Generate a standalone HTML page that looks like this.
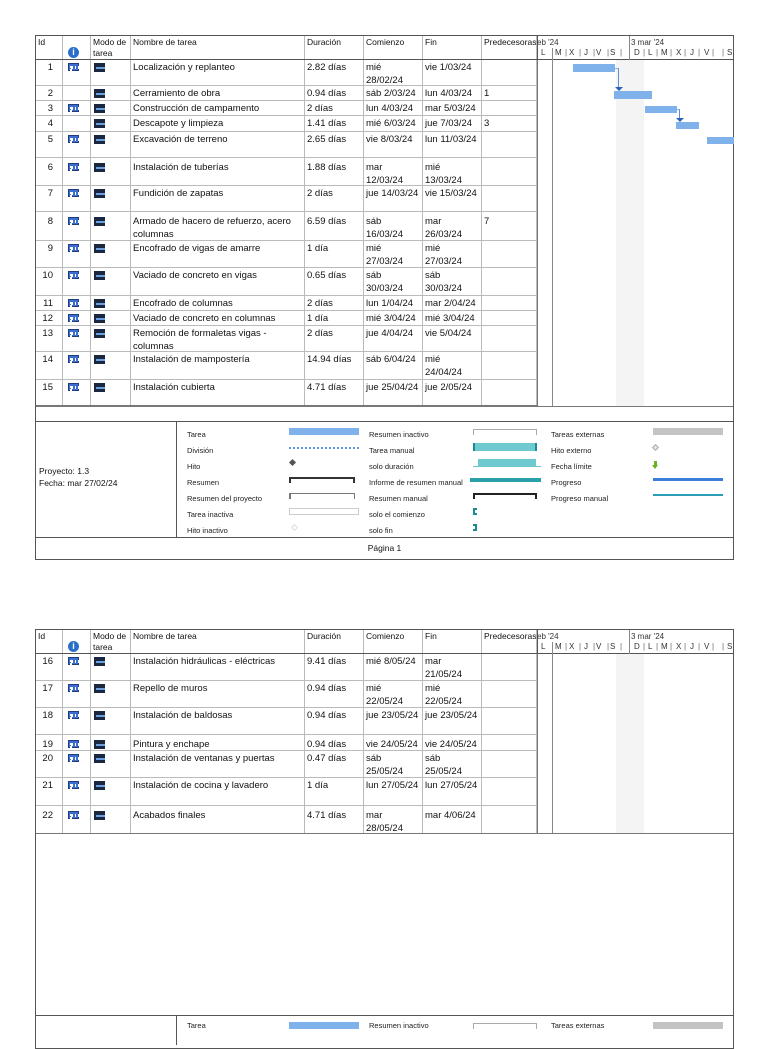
<!DOCTYPE html>
<html><head><meta charset="utf-8"><style>
*{margin:0;padding:0;box-sizing:border-box}
body{width:768px;height:1024px;background:#fff;position:relative;overflow:hidden;font-family:"Liberation Sans",sans-serif;font-size:9.5px;color:#111}
.pg{position:absolute;left:35px;width:699px;border:1px solid #555;background:#fff}
.r{position:absolute;left:0;width:501px;border-bottom:1px solid #bbb}
.c{position:absolute;top:0;bottom:0;border-right:1px solid #bbb;padding:1px 2px 0 2px;line-height:13px;overflow:hidden;white-space:nowrap}
.id{left:0;width:27px;text-align:right;padding-right:9px}
.ind{left:27px;width:28px}
.mo{left:55px;width:40px}
.nm{left:95px;width:174px}
.du{left:269px;width:59px}
.co{left:328px;width:59px;white-space:normal}
.fi{left:387px;width:59px;white-space:normal}
.pr{left:446px;width:55px}
.hd{font-size:8.5px;line-height:11px;padding-top:1px}
.cal{position:absolute;left:5px;top:3px;width:11px;height:8px;background:#3a6fd0;border:1px solid #233c80}
.cal:after{content:"";position:absolute;left:1px;top:2px;width:7px;height:3px;border-left:2px dotted #fff;border-right:2px dotted #fff;background:repeating-linear-gradient(90deg,#fff 0 1px,transparent 1px 3px)}
.md{position:absolute;left:3px;top:3px;width:11px;height:9px;background:#1a2740}
.md:after{content:"";position:absolute;left:2px;top:4px;width:9px;height:2px;background:#6aa0e0}
.bar{position:absolute;background:#7fb2ea}
.g{position:absolute;font-size:8px;color:#333;line-height:10px;white-space:nowrap}
.lg{position:absolute;font-size:7.5px;color:#222}
</style></head><body>

<!-- PAGE 1 -->
<div class="pg" style="top:35px;height:525px">
 <div class="r" style="top:0;height:24px;border-bottom:1px solid #555">
  <div class="c id hd" style="text-align:left">Id</div>
  <div class="c ind hd"><span style="position:absolute;left:5px;top:11px;width:11px;height:11px;border-radius:50%;background:#2a6fc9;color:#fff;font-weight:bold;font-size:9px;text-align:center;line-height:11px">i</span></div>
  <div class="c mo hd" style="white-space:normal">Modo de tarea</div>
  <div class="c nm hd">Nombre de tarea</div>
  <div class="c du hd">Duración</div>
  <div class="c co hd">Comienzo</div>
  <div class="c fi hd">Fin</div>
  <div class="c pr hd">Predecesoras</div>
 </div>
 <div style="position:absolute;left:501px;top:0;width:197px;height:24px;border-bottom:1px solid #555;border-left:1px solid #555"></div>
 <div style="position:absolute;left:501px;top:24px;width:1px;height:346px;background:#777"></div>
 <div style="position:absolute;left:516px;top:12px;width:1px;height:358px;background:#888"></div>
 <div style="position:absolute;left:580px;top:24px;width:28px;height:346px;background:#f4f4f4"></div>
 <div class="g" style="left:501px;top:2px">eb '24</div>
 <div class="g" style="left:595px;top:2px">3 mar '24</div>
 <div style="position:absolute;left:593px;top:0;width:1px;height:24px;background:#888"></div>
 <div class="g" style="left:505px;top:12px">L</div><div class="g" style="left:519px;top:12px">M</div><div class="g" style="left:533px;top:12px">X</div><div class="g" style="left:548px;top:12px">J</div><div class="g" style="left:560px;top:12px">V</div><div class="g" style="left:574px;top:12px">S</div><div class="g" style="left:598px;top:12px">D</div><div class="g" style="left:612px;top:12px">L</div><div class="g" style="left:625px;top:12px">M</div><div class="g" style="left:640px;top:12px">X</div><div class="g" style="left:654px;top:12px">J</div><div class="g" style="left:668px;top:12px">V</div><div class="g" style="left:691px;top:12px">S</div>
 <div class="g" style="left:529px;top:12px;color:#666">|</div><div class="g" style="left:543px;top:12px;color:#666">|</div><div class="g" style="left:557px;top:12px;color:#666">|</div><div class="g" style="left:571px;top:12px;color:#666">|</div><div class="g" style="left:584px;top:12px;color:#666">|</div><div class="g" style="left:607px;top:12px;color:#666">|</div><div class="g" style="left:620px;top:12px;color:#666">|</div><div class="g" style="left:634px;top:12px;color:#666">|</div><div class="g" style="left:648px;top:12px;color:#666">|</div><div class="g" style="left:662px;top:12px;color:#666">|</div><div class="g" style="left:676px;top:12px;color:#666">|</div><div class="g" style="left:686px;top:12px;color:#666">|</div>
 <div class="bar" style="left:537px;top:28px;width:42px;height:8px"></div>
 <div style="position:absolute;left:579px;top:32px;width:4px;height:20px;border-top:1px solid #7fb2ea;border-right:1px solid #5a90d8"></div>
 <div style="position:absolute;left:579px;top:51px;border-left:4px solid transparent;border-right:4px solid transparent;border-top:4px solid #2a60b8"></div>
 <div class="bar" style="left:578px;top:55px;width:38px;height:8px"></div>
 <div class="bar" style="left:609px;top:70px;width:32px;height:7px"></div>
 <div style="position:absolute;left:641px;top:73px;width:3px;height:10px;border-top:1px solid #7fb2ea;border-right:1px solid #5a90d8"></div>
 <div style="position:absolute;left:640px;top:82px;border-left:4px solid transparent;border-right:4px solid transparent;border-top:4px solid #2a60b8"></div>
 <div class="bar" style="left:640px;top:86px;width:23px;height:7px"></div>
 <div class="bar" style="left:671px;top:101px;width:27px;height:7px"></div>

 <div class="r" style="top:24px;height:26px"><div class="c id">1</div><div class="c ind"><i class="cal"></i></div><div class="c mo"><i class="md"></i></div><div class="c nm">Localización y replanteo</div><div class="c du">2.82 días</div><div class="c co">mié 28/02/24</div><div class="c fi">vie 1/03/24</div><div class="c pr"></div></div>
 <div class="r" style="top:50px;height:15px"><div class="c id">2</div><div class="c ind"></div><div class="c mo"><i class="md"></i></div><div class="c nm">Cerramiento de obra</div><div class="c du">0.94 días</div><div class="c co">sáb 2/03/24</div><div class="c fi">lun 4/03/24</div><div class="c pr">1</div></div>
 <div class="r" style="top:65px;height:15px"><div class="c id">3</div><div class="c ind"><i class="cal"></i></div><div class="c mo"><i class="md"></i></div><div class="c nm">Construcción de campamento</div><div class="c du">2 días</div><div class="c co">lun 4/03/24</div><div class="c fi">mar 5/03/24</div><div class="c pr"></div></div>
 <div class="r" style="top:80px;height:16px"><div class="c id">4</div><div class="c ind"></div><div class="c mo"><i class="md"></i></div><div class="c nm">Descapote y limpieza</div><div class="c du">1.41 días</div><div class="c co">mié 6/03/24</div><div class="c fi">jue 7/03/24</div><div class="c pr">3</div></div>
 <div class="r" style="top:96px;height:26px"><div class="c id">5</div><div class="c ind"><i class="cal"></i></div><div class="c mo"><i class="md"></i></div><div class="c nm">Excavación de terreno</div><div class="c du">2.65 días</div><div class="c co">vie 8/03/24</div><div class="c fi">lun 11/03/24</div><div class="c pr"></div></div>
 <div class="r" style="top:122px;height:28px"><div class="c id" style="padding-top:3px">6</div><div class="c ind"><i class="cal" style="top:5px"></i></div><div class="c mo"><i class="md" style="top:5px"></i></div><div class="c nm" style="padding-top:3px">Instalación de tuberías</div><div class="c du" style="padding-top:3px">1.88 días</div><div class="c co" style="padding-top:3px">mar 12/03/24</div><div class="c fi" style="padding-top:3px">mié 13/03/24</div><div class="c pr"></div></div>
 <div class="r" style="top:150px;height:26px"><div class="c id">7</div><div class="c ind"><i class="cal"></i></div><div class="c mo"><i class="md"></i></div><div class="c nm">Fundición de zapatas</div><div class="c du">2 días</div><div class="c co">jue 14/03/24</div><div class="c fi">vie 15/03/24</div><div class="c pr"></div></div>
 <div class="r" style="top:176px;height:29px"><div class="c id" style="padding-top:3px">8</div><div class="c ind"><i class="cal" style="top:5px"></i></div><div class="c mo"><i class="md" style="top:5px"></i></div><div class="c nm" style="padding-top:3px;white-space:normal">Armado de hacero de refuerzo, acero columnas</div><div class="c du" style="padding-top:3px">6.59 días</div><div class="c co" style="padding-top:3px">sáb 16/03/24</div><div class="c fi" style="padding-top:3px">mar 26/03/24</div><div class="c pr" style="padding-top:3px">7</div></div>
 <div class="r" style="top:205px;height:27px"><div class="c id">9</div><div class="c ind"><i class="cal"></i></div><div class="c mo"><i class="md"></i></div><div class="c nm">Encofrado de vigas de amarre</div><div class="c du">1 día</div><div class="c co">mié 27/03/24</div><div class="c fi">mié 27/03/24</div><div class="c pr"></div></div>
 <div class="r" style="top:232px;height:28px"><div class="c id">10</div><div class="c ind"><i class="cal"></i></div><div class="c mo"><i class="md"></i></div><div class="c nm">Vaciado de concreto en vigas</div><div class="c du">0.65 días</div><div class="c co">sáb 30/03/24</div><div class="c fi">sáb 30/03/24</div><div class="c pr"></div></div>
 <div class="r" style="top:260px;height:15px"><div class="c id">11</div><div class="c ind"><i class="cal"></i></div><div class="c mo"><i class="md"></i></div><div class="c nm">Encofrado de columnas</div><div class="c du">2 días</div><div class="c co">lun 1/04/24</div><div class="c fi">mar 2/04/24</div><div class="c pr"></div></div>
 <div class="r" style="top:275px;height:15px"><div class="c id">12</div><div class="c ind"><i class="cal"></i></div><div class="c mo"><i class="md"></i></div><div class="c nm">Vaciado de concreto en columnas</div><div class="c du">1 día</div><div class="c co">mié 3/04/24</div><div class="c fi">mié 3/04/24</div><div class="c pr"></div></div>
 <div class="r" style="top:290px;height:26px"><div class="c id">13</div><div class="c ind"><i class="cal"></i></div><div class="c mo"><i class="md"></i></div><div class="c nm" style="white-space:normal">Remoción de formaletas vigas - columnas</div><div class="c du">2 días</div><div class="c co">jue 4/04/24</div><div class="c fi">vie 5/04/24</div><div class="c pr"></div></div>
 <div class="r" style="top:316px;height:28px"><div class="c id">14</div><div class="c ind"><i class="cal"></i></div><div class="c mo"><i class="md"></i></div><div class="c nm">Instalación de mampostería</div><div class="c du">14.94 días</div><div class="c co">sáb 6/04/24</div><div class="c fi">mié 24/04/24</div><div class="c pr"></div></div>
 <div class="r" style="top:344px;height:26px;border-bottom:1px solid #777"><div class="c id">15</div><div class="c ind"><i class="cal"></i></div><div class="c mo"><i class="md"></i></div><div class="c nm">Instalación cubierta</div><div class="c du">4.71 días</div><div class="c co">jue 25/04/24</div><div class="c fi">jue 2/05/24</div><div class="c pr"></div></div>
 <div style="position:absolute;left:0;top:370px;width:697px;height:1px;background:#777"></div>
 <div style="position:absolute;left:0;top:385px;width:697px;height:1px;background:#555"></div>
 <div style="position:absolute;left:140px;top:385px;width:1px;height:117px;background:#555"></div>
 <div style="position:absolute;left:3px;top:429px;font-size:8.5px;line-height:12px">Proyecto: 1.3<br>Fecha: mar 27/02/24</div>
 <div class="lg" style="left:151px;top:391px;line-height:16px">Tarea<br>División<br>Hito<br>Resumen<br>Resumen del proyecto<br>Tarea inactiva<br>Hito inactivo</div>
 <div class="lg" style="left:333px;top:391px;line-height:16px">Resumen inactivo<br>Tarea manual<br>solo duración<br>Informe de resumen manual<br>Resumen manual<br>solo el comienzo<br>solo fin</div>
 <div class="lg" style="left:515px;top:391px;line-height:16px">Tareas externas<br>Hito externo<br>Fecha límite<br>Progreso<br>Progreso manual</div>
 <div style="position:absolute;left:253px;top:392px;width:70px;height:7px;background:#7fb2ea"></div>
 <div style="position:absolute;left:253px;top:411px;width:70px;height:2px;border-top:2px dotted #5a9ae0"></div>
 <div style="position:absolute;left:254px;top:424px;width:5px;height:5px;background:#555;transform:rotate(45deg)"></div>
 <div style="position:absolute;left:253px;top:441px;width:66px;height:6px;border:2px solid #333;border-bottom:none"></div>
 <div style="position:absolute;left:253px;top:457px;width:66px;height:6px;border:1px solid #777;border-bottom:none;border-left-width:2px"></div>
 <div style="position:absolute;left:253px;top:472px;width:70px;height:7px;border:1px solid #ccc"></div>
 <div style="position:absolute;left:256px;top:489px;width:5px;height:5px;border:1px solid #ddd;transform:rotate(45deg)"></div>
 <div style="position:absolute;left:437px;top:393px;width:64px;height:6px;border:1px solid #aaa;border-bottom:none"></div>
 <div style="position:absolute;left:437px;top:407px;width:64px;height:8px;background:#6fcad0;border-left:2px solid #1a8c94;border-right:2px solid #1a8c94"></div>
 <div style="position:absolute;left:437px;top:423px;width:68px;height:8px;border-bottom:1px solid #6fcad0"><div style="margin-left:5px;width:58px;height:7px;background:#6fcad0"></div></div>
 <div style="position:absolute;left:434px;top:442px;width:71px;height:4px;background:#2aa0a8"></div>
 <div style="position:absolute;left:437px;top:457px;width:64px;height:6px;border:2px solid #222;border-bottom:none"></div>
 <div style="position:absolute;left:437px;top:472px;width:4px;height:7px;border:2px solid #1a8c94;border-right:none"></div>
 <div style="position:absolute;left:437px;top:488px;width:4px;height:7px;border:2px solid #1a8c94;border-left:none"></div>
 <div style="position:absolute;left:617px;top:392px;width:70px;height:7px;background:#c4c4c4"></div>
 <div style="position:absolute;left:617px;top:409px;width:5px;height:5px;border:1px solid #aaa;background:#e6e6e6;transform:rotate(45deg)"></div>
 <div style="position:absolute;left:618px;top:425px;width:3px;height:4px;background:#6ab020"></div>
 <div style="position:absolute;left:616px;top:429px;border-left:3px solid transparent;border-right:3px solid transparent;border-top:4px solid #6ab020"></div>
 <div style="position:absolute;left:617px;top:442px;width:70px;height:3px;background:#3a7ed8"></div>
 <div style="position:absolute;left:617px;top:458px;width:70px;height:2px;background:#2aa0b8"></div>
 <div style="position:absolute;left:0;top:501px;width:697px;height:1px;background:#555"></div>
 <div style="position:absolute;left:0;top:507px;width:697px;text-align:center;font-size:8.5px">Página 1</div>
</div>

<!-- PAGE 2 -->
<div class="pg" style="top:629px;height:420px">
 <div class="r" style="top:0;height:24px;border-bottom:1px solid #555">
  <div class="c id hd" style="text-align:left">Id</div>
  <div class="c ind hd"><span style="position:absolute;left:5px;top:11px;width:11px;height:11px;border-radius:50%;background:#2a6fc9;color:#fff;font-weight:bold;font-size:9px;text-align:center;line-height:11px">i</span></div>
  <div class="c mo hd" style="white-space:normal">Modo de tarea</div>
  <div class="c nm hd">Nombre de tarea</div>
  <div class="c du hd">Duración</div>
  <div class="c co hd">Comienzo</div>
  <div class="c fi hd">Fin</div>
  <div class="c pr hd">Predecesoras</div>
 </div>
 <div style="position:absolute;left:501px;top:0;width:197px;height:24px;border-bottom:1px solid #555;border-left:1px solid #555"></div>
 <div style="position:absolute;left:501px;top:24px;width:1px;height:180px;background:#777"></div>
 <div style="position:absolute;left:516px;top:12px;width:1px;height:192px;background:#888"></div>
 <div style="position:absolute;left:580px;top:24px;width:28px;height:180px;background:#f4f4f4"></div>
 <div class="g" style="left:501px;top:2px">eb '24</div>
 <div class="g" style="left:595px;top:2px">3 mar '24</div>
 <div style="position:absolute;left:593px;top:0;width:1px;height:24px;background:#888"></div>
 <div class="g" style="left:505px;top:12px">L</div><div class="g" style="left:519px;top:12px">M</div><div class="g" style="left:533px;top:12px">X</div><div class="g" style="left:548px;top:12px">J</div><div class="g" style="left:560px;top:12px">V</div><div class="g" style="left:574px;top:12px">S</div><div class="g" style="left:598px;top:12px">D</div><div class="g" style="left:612px;top:12px">L</div><div class="g" style="left:625px;top:12px">M</div><div class="g" style="left:640px;top:12px">X</div><div class="g" style="left:654px;top:12px">J</div><div class="g" style="left:668px;top:12px">V</div><div class="g" style="left:691px;top:12px">S</div>
 <div class="g" style="left:529px;top:12px;color:#666">|</div><div class="g" style="left:543px;top:12px;color:#666">|</div><div class="g" style="left:557px;top:12px;color:#666">|</div><div class="g" style="left:571px;top:12px;color:#666">|</div><div class="g" style="left:584px;top:12px;color:#666">|</div><div class="g" style="left:607px;top:12px;color:#666">|</div><div class="g" style="left:620px;top:12px;color:#666">|</div><div class="g" style="left:634px;top:12px;color:#666">|</div><div class="g" style="left:648px;top:12px;color:#666">|</div><div class="g" style="left:662px;top:12px;color:#666">|</div><div class="g" style="left:676px;top:12px;color:#666">|</div><div class="g" style="left:686px;top:12px;color:#666">|</div>

 <div class="r" style="top:24px;height:27px"><div class="c id">16</div><div class="c ind"><i class="cal"></i></div><div class="c mo"><i class="md"></i></div><div class="c nm">Instalación hidráulicas - eléctricas</div><div class="c du">9.41 días</div><div class="c co">mié 8/05/24</div><div class="c fi">mar 21/05/24</div><div class="c pr"></div></div>
 <div class="r" style="top:51px;height:27px"><div class="c id">17</div><div class="c ind"><i class="cal"></i></div><div class="c mo"><i class="md"></i></div><div class="c nm">Repello de muros</div><div class="c du">0.94 días</div><div class="c co">mié 22/05/24</div><div class="c fi">mié 22/05/24</div><div class="c pr"></div></div>
 <div class="r" style="top:78px;height:27px"><div class="c id">18</div><div class="c ind"><i class="cal"></i></div><div class="c mo"><i class="md"></i></div><div class="c nm">Instalación de baldosas</div><div class="c du">0.94 días</div><div class="c co">jue 23/05/24</div><div class="c fi">jue 23/05/24</div><div class="c pr"></div></div>
 <div class="r" style="top:105px;height:16px"><div class="c id" style="padding-top:3px">19</div><div class="c ind"><i class="cal" style="top:5px"></i></div><div class="c mo"><i class="md" style="top:5px"></i></div><div class="c nm" style="padding-top:3px">Pintura y enchape</div><div class="c du" style="padding-top:3px">0.94 días</div><div class="c co" style="padding-top:3px">vie 24/05/24</div><div class="c fi" style="padding-top:3px">vie 24/05/24</div><div class="c pr"></div></div>
 <div class="r" style="top:121px;height:27px"><div class="c id">20</div><div class="c ind"><i class="cal"></i></div><div class="c mo"><i class="md"></i></div><div class="c nm">Instalación de ventanas y puertas</div><div class="c du">0.47 días</div><div class="c co">sáb 25/05/24</div><div class="c fi">sáb 25/05/24</div><div class="c pr"></div></div>
 <div class="r" style="top:148px;height:28px"><div class="c id">21</div><div class="c ind"><i class="cal"></i></div><div class="c mo"><i class="md"></i></div><div class="c nm">Instalación de cocina y lavadero</div><div class="c du">1 día</div><div class="c co">lun 27/05/24</div><div class="c fi">lun 27/05/24</div><div class="c pr"></div></div>
 <div class="r" style="top:176px;height:28px;border-bottom:none"><div class="c id" style="padding-top:3px">22</div><div class="c ind"><i class="cal" style="top:5px"></i></div><div class="c mo"><i class="md" style="top:5px"></i></div><div class="c nm" style="padding-top:3px">Acabados finales</div><div class="c du" style="padding-top:3px">4.71 días</div><div class="c co" style="padding-top:3px">mar 28/05/24</div><div class="c fi" style="padding-top:3px">mar 4/06/24</div><div class="c pr"></div></div>
 <div style="position:absolute;left:0;top:203px;width:697px;height:1px;background:#777"></div>
 <div style="position:absolute;left:0;top:385px;width:697px;height:1px;background:#555"></div>
 <div style="position:absolute;left:140px;top:385px;width:1px;height:30px;background:#555"></div>
 <div class="lg" style="left:151px;top:391px">Tarea</div>
 <div class="lg" style="left:333px;top:391px">Resumen inactivo</div>
 <div class="lg" style="left:515px;top:391px">Tareas externas</div>
 <div style="position:absolute;left:253px;top:392px;width:70px;height:7px;background:#7fb2ea"></div>
 <div style="position:absolute;left:437px;top:393px;width:64px;height:6px;border:1px solid #aaa;border-bottom:none"></div>
 <div style="position:absolute;left:617px;top:392px;width:70px;height:7px;background:#c4c4c4"></div>
</div>
</body></html>
